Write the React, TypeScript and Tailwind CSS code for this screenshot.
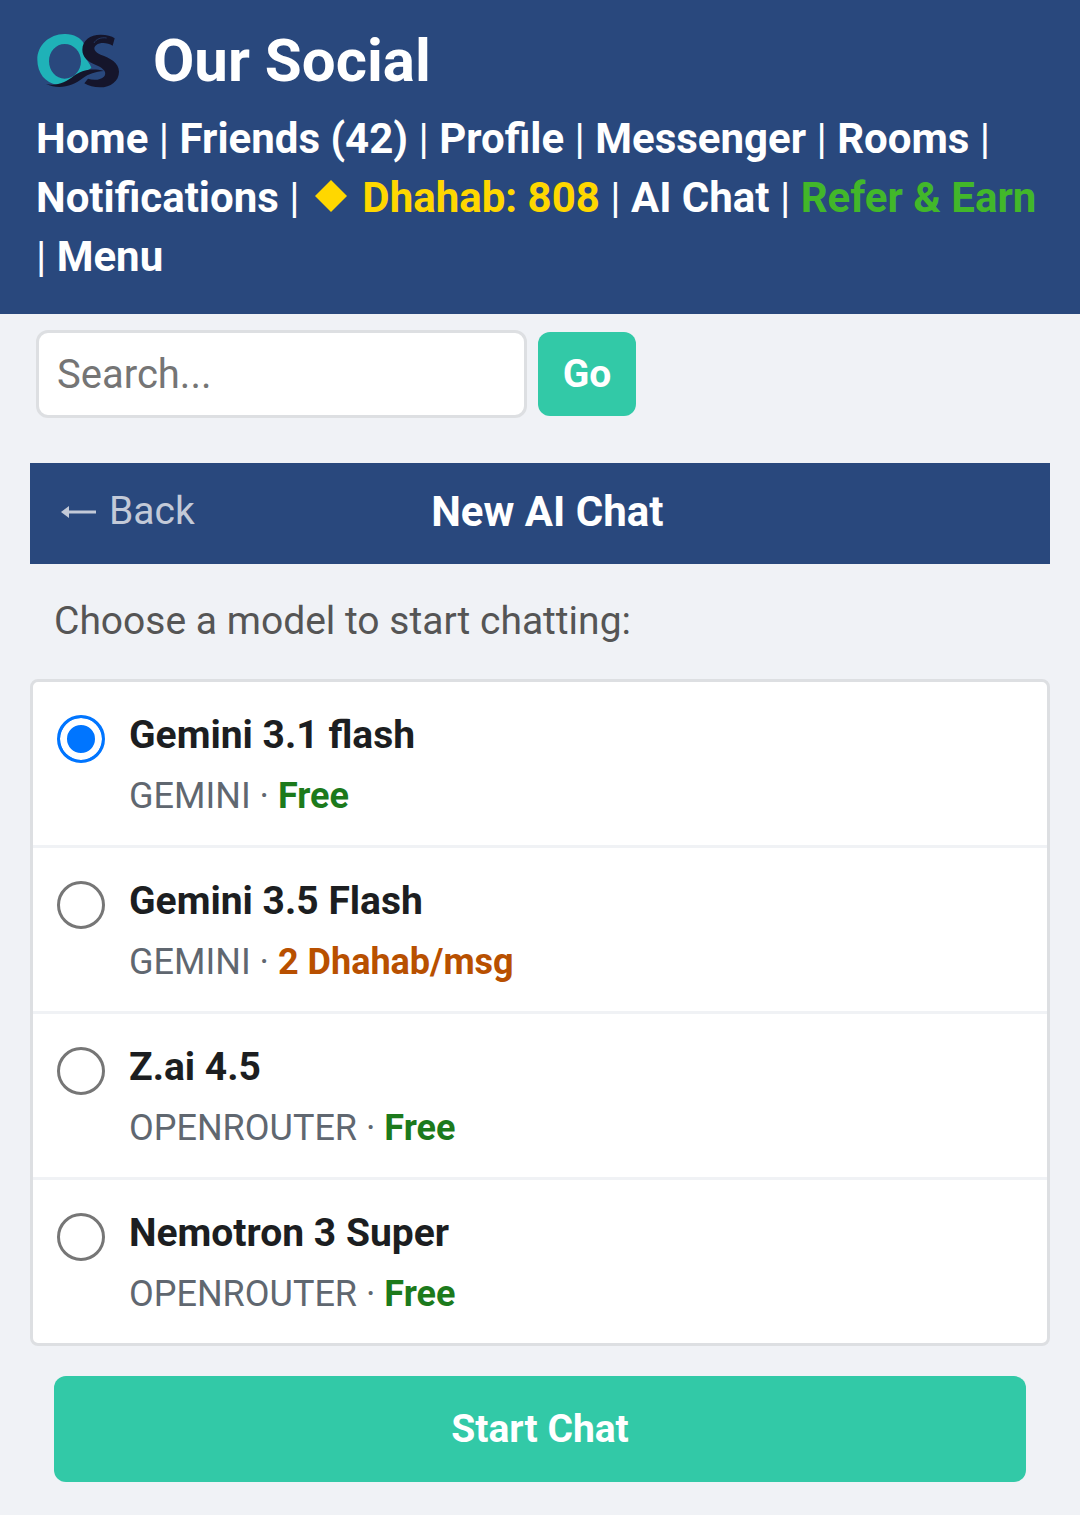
import { useState } from "react";

const models = [
  { id: "gemini-3.1-flash", name: "Gemini 3.1 flash", provider: "GEMINI", price: "Free", free: true },
  { id: "gemini-3.5-flash", name: "Gemini 3.5 Flash", provider: "GEMINI", price: "2 Dhahab/msg", free: false },
  { id: "zai-4.5", name: "Z.ai 4.5", provider: "OPENROUTER", price: "Free", free: true },
  { id: "nemotron-3-super", name: "Nemotron 3 Super", provider: "OPENROUTER", price: "Free", free: true },
];

function Logo() {
  return (
    <svg viewBox="48 42 252 168" className="w-[84px] h-[56px]" aria-hidden="true">
      <path
        fillRule="evenodd"
        fill="#1fb2b8"
        d="M133 45 C160 44 182 56 192 74 L194 112 C200 124 210 134 214 146 C206 154 192 156 176 166 C158 182 140 196 112 197 C76 192 52 162 52 122 C52 78 88 46 133 45 Z M134 75 C108 75 87 98 87 127 C87 156 108 179 134 179 C161 179 183 156 183 127 C183 98 161 75 134 75 Z"
      />
      <path
        fill="#15152b"
        d="M284 58 L278 80 C262 70 240 70 229 78 C216 88 226 100 242 107 C270 117 297 130 297 158 C297 186 272 205 240 205 C222 205 206 201 193 193 L204 179 C222 186 246 182 254 170 C262 156 244 144 226 137 C204 128 187 114 187 92 C187 64 210 47 242 47 C260 47 275 51 284 58 Z"
      />
      <path fill="#15152b" d="M78 195 C110 202 138 190 160 172 C184 154 214 146 252 156 C226 158 206 164 188 178 C160 200 118 214 78 195 Z" />
      <path fill="none" stroke="#29487d" strokeWidth="2" d="M222 72 C228 60 244 54 260 57" />
    </svg>
  );
}

export default function App() {
  const [selected, setSelected] = useState(models[0].id);
  const [query, setQuery] = useState("");

  return (
    <div className="min-h-screen bg-[#f0f2f6] pb-8 font-[Roboto,sans-serif] text-[#1c1e21]">
      <header className="bg-[#29487d] px-9 pt-[26px] pb-7 text-white">
        <div className="flex items-center gap-[33px]">
          <Logo />
          <h1 className="text-[60px] leading-[70px] font-bold">Our Social</h1>
        </div>
        <nav className="mt-[13px] text-[42px] leading-[59px]">
          <a href="#" className="font-bold">Home</a> | <a href="#" className="font-bold">Friends (42)</a> |{" "}
          <a href="#" className="font-bold">Profile</a> | <a href="#" className="font-bold">Messenger</a> |{" "}
          <a href="#" className="font-bold">Rooms</a> | <a href="#" className="font-bold">Notifications</a> |{" "}
          <a href="#" className="font-bold text-[#ffd700]">
            <svg viewBox="0 0 36 32" className="inline-block w-9 h-8 mx-[3px] align-baseline" aria-hidden="true">
              <path d="M18 0 L34 16 L18 32 L2 16 Z" fill="currentColor" />
            </svg>{" "}
            Dhahab: 808
          </a>{" "}
          | <a href="#" className="font-bold">AI Chat</a> |{" "}
          <a href="#" className="font-bold text-[#42b72a]">Refer &amp; Earn</a> | <a href="#" className="font-bold">Menu</a>
        </nav>
      </header>

      <form className="flex items-center gap-[11px] px-9 pt-4" onSubmit={(e) => e.preventDefault()}>
        <input
          type="text"
          aria-label="Search"
          placeholder="Search..."
          value={query}
          onChange={(e) => setQuery(e.target.value)}
          className="w-[491px] h-[88px] px-[18px] text-[40px] bg-white border-3 border-[#dddfe2] rounded-xl placeholder:text-[#757575]"
        />
        <button type="submit" className="h-[84px] w-[98px] text-[39px] font-bold text-white bg-[#32c9a7] rounded-xl">
          Go
        </button>
      </form>

      <main className="mt-[45px] px-[30px]">
        <div className="flex items-center justify-between bg-[#29487d] px-[30px] pt-5 pb-6">
          <a href="#" className="flex items-center gap-[11px] text-[39px] leading-[57px] text-[#c3cad8]">
            <svg viewBox="0 0 38 14" className="w-[38px] h-[14px]" aria-hidden="true">
              <path d="M1 7 L9 1 V5.5 H36 V8.5 H9 V13 Z" fill="currentColor" />
            </svg>
            Back
          </a>
          <h2 className="text-[42px] leading-[57px] font-bold text-white">New AI Chat</h2>
          <span className="w-[120px]" />
        </div>

        <p className="px-6 py-[30px] text-[39px] leading-[55px] text-[#555]">Choose a model to start chatting:</p>

        <div className="bg-white border-3 border-[#dddfe2] rounded-lg overflow-hidden">
          {models.map((m) => (
            <label
              key={m.id}
              className="flex items-start gap-6 px-6 pt-6 pb-5 border-b-3 border-[#f0f2f5] last:border-b-0 cursor-pointer"
            >
              <input
                type="radio"
                name="model"
                value={m.id}
                checked={selected === m.id}
                onChange={() => setSelected(m.id)}
                className="appearance-none shrink-0 mt-[9px] size-12 rounded-full border-3 border-[#767676] bg-white checked:border-[#0075ff] checked:bg-[#0075ff] checked:shadow-[inset_0_0_0_7px_#fff]"
              />
              <span className="flex flex-col gap-1">
                <span className="text-[39px] leading-[58px] font-bold">{m.name}</span>
                <span className="text-[36px] leading-[57px] text-[#606770]">
                  {m.provider} ·{" "}
                  <b className={m.free ? "font-bold text-[#1c7a1c]" : "font-bold text-[#b85000]"}>{m.price}</b>
                </span>
              </span>
            </label>
          ))}
        </div>

        <div className="px-6 pt-[30px]">
          <button type="button" className="w-full h-[106px] text-[39px] font-bold text-white bg-[#32c9a7] rounded-xl">
            Start Chat
          </button>
        </div>
      </main>
    </div>
  );
}
